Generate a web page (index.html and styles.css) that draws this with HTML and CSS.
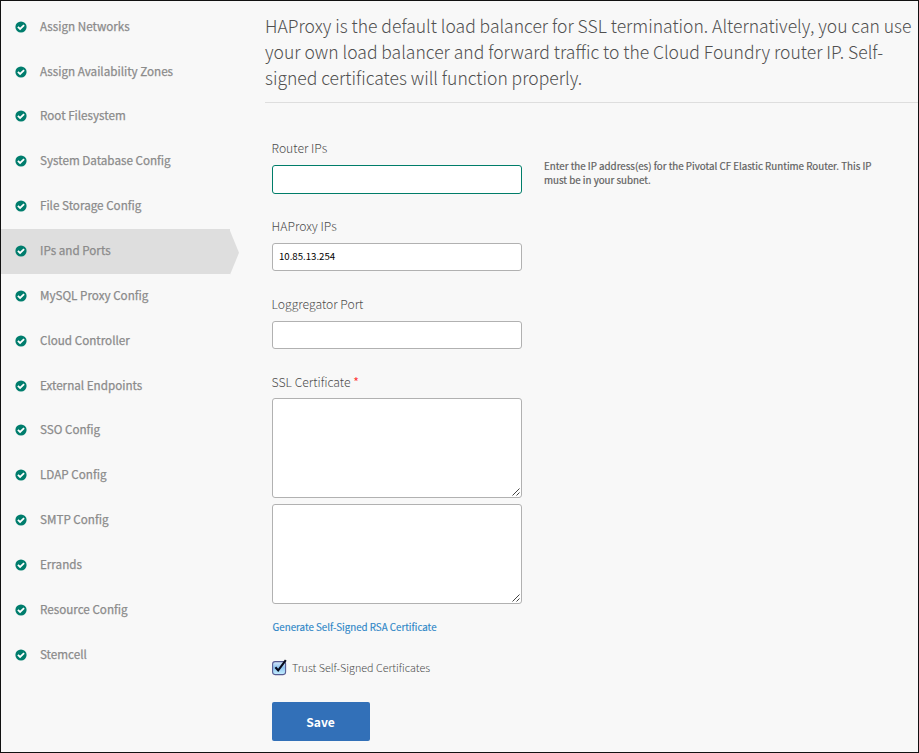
FILE: index.html
```html
<!DOCTYPE html>
<html lang="en">
<head>
<meta charset="utf-8">
<title>IPs and Ports</title>
<link rel="stylesheet" href="styles.css">
</head>
<body>
<svg class="defs" aria-hidden="true">
  <symbol id="done" viewBox="0 0 12 12">
    <circle cx="6" cy="6" r="5.6" fill="#007d6d"/>
    <path d="M2.9 5.8 5.1 8 9.1 4.1" fill="none" stroke="#fff" stroke-width="1.8"/>
  </symbol>
  <symbol id="grip" viewBox="0 0 8 8">
    <path d="M.5 7.5 7.5 .5M4.5 7.5 7.5 4.5" fill="none" stroke="#444" stroke-width="1"/>
  </symbol>
</svg>
<div class="page">
  <nav class="sidebar">
    <a class="item"><svg class="tick"><use href="#done"/></svg>Assign Networks</a>
    <a class="item"><svg class="tick"><use href="#done"/></svg>Assign Availability Zones</a>
    <a class="item"><svg class="tick"><use href="#done"/></svg>Root Filesystem</a>
    <a class="item"><svg class="tick"><use href="#done"/></svg>System Database Config</a>
    <a class="item"><svg class="tick"><use href="#done"/></svg>File Storage Config</a>
    <a class="item active"><svg class="tick"><use href="#done"/></svg>IPs and Ports</a>
    <a class="item"><svg class="tick"><use href="#done"/></svg>MySQL Proxy Config</a>
    <a class="item"><svg class="tick"><use href="#done"/></svg>Cloud Controller</a>
    <a class="item"><svg class="tick"><use href="#done"/></svg>External Endpoints</a>
    <a class="item"><svg class="tick"><use href="#done"/></svg>SSO Config</a>
    <a class="item"><svg class="tick"><use href="#done"/></svg>LDAP Config</a>
    <a class="item"><svg class="tick"><use href="#done"/></svg>SMTP Config</a>
    <a class="item"><svg class="tick"><use href="#done"/></svg>Errands</a>
    <a class="item"><svg class="tick"><use href="#done"/></svg>Resource Config</a>
    <a class="item"><svg class="tick"><use href="#done"/></svg>Stemcell</a>
  </nav>
  <main class="content">
    <p class="intro">HAProxy is the default load balancer for SSL termination. Alternatively, you can use<br>your own load balancer and forward traffic to the Cloud Foundry router IP. Self-<br>signed certificates will function properly.</p>
    <form class="form">
      <div class="field">
        <label class="label">Router IPs</label>
        <div class="row">
          <input class="input focused" type="text">
          <p class="help">Enter the IP address(es) for the Pivotal CF Elastic Runtime Router. This IP<br>must be in your subnet.</p>
        </div>
      </div>
      <div class="field">
        <label class="label">HAProxy IPs</label>
        <input class="input" type="text" value="10.85.13.254">
      </div>
      <div class="field">
        <label class="label">Loggregator Port</label>
        <input class="input" type="text">
      </div>
      <div class="field certs">
        <label class="label">SSL Certificate <span class="required">*</span></label>
        <div class="area"><textarea class="text"></textarea><svg class="grip"><use href="#grip"/></svg></div>
        <div class="area"><textarea class="text"></textarea><svg class="grip"><use href="#grip"/></svg></div>
      </div>
      <a class="generate">Generate Self-Signed RSA Certificate</a>
      <label class="trust">
        <svg class="check" viewBox="0 0 16 17">
          <defs><linearGradient id="aqua" x1="0" y1="0" x2="0" y2="1"><stop offset="0" stop-color="#d9e9fa"/><stop offset=".45" stop-color="#8fc3f0"/><stop offset="1" stop-color="#c5f0ff"/></linearGradient></defs>
          <rect x=".6" y="2.6" width="13" height="13" rx="2.5" fill="url(#aqua)" stroke="#565a91" stroke-width="1.1"/>
          <path d="M3.4 8.2 6.2 11.4 13.8 1.2" fill="none" stroke="#080b1c" stroke-width="2.1"/>
        </svg>
        <span>Trust Self-Signed Certificates</span>
      </label>
      <button class="save" type="button">Save</button>
    </form>
  </main>
</div>
</body>
</html>
```
FILE: styles.css
```css
* { box-sizing: border-box; }
body {
  margin: 0;
  font-family: "Noto Sans CJK SC", "Open Sans", sans-serif;
  color: #606060;
}
.defs { display: none; }
.page {
  display: flex;
  height: 753px;
  overflow: hidden;
  border: 1px solid #111;
  background: #f8f8f8;
}
.sidebar {
  width: 264px;
  flex: none;
  padding-top: 3.5px;
}
.item {
  display: flex;
  align-items: center;
  gap: 13.3px;
  width: 229px;
  height: 44.86px;
  padding: 0 0 2.4px 13.7px;
  color: #8b8b8b;
  font-size: 11.67px;
  line-height: 18px;
  -webkit-text-stroke: .25px;
}
.active {
  position: relative;
  background: #dedede;
}
.active::after {
  content: "";
  position: absolute;
  top: 0;
  left: 100%;
  width: 9px;
  height: 46px;
  background: #dedede;
  clip-path: polygon(0 2px, 9px 24px, 0 46px);
}
.tick { width: 12px; height: 12px; margin-top: 2px; }
.content { flex: 1; }
.intro {
  height: 102px;
  margin: 0;
  padding-top: 12px;
  border-bottom: 1px solid #dedede;
  color: #505050;
  font-size: 17.52px;
  font-weight: 300;
  line-height: 26px;
  white-space: nowrap;
}
.form {
  display: flex;
  flex-direction: column;
  align-items: flex-start;
  padding: 36px 0 0 7px;
}
.field { height: 78px; }
.label {
  display: block;
  height: 25.5px;
  margin-left: -.4px;
  color: #4c4c4c;
  font-size: 12.2px;
  font-weight: 300;
  line-height: 18px;
}
.required { color: #ff3030; font-weight: 400; }
.row { display: flex; gap: 22px; }
.input, .text {
  display: block;
  width: 250px;
  border: 1px solid #b1b1b1;
  border-radius: 3px;
  background: #fff;
  color: #000;
  font-family: inherit;
  outline: none;
}
.input {
  height: 28px;
  padding: 0 6px 1px;
  font-size: 9.65px;
}
.focused { height: 29px; border-color: #007d69; }
.help {
  margin: -6px 0 0;
  font-size: 9.77px;
  line-height: 14px;
  white-space: nowrap;
  -webkit-text-stroke: .2px;
}
.certs { height: 246px; }
.certs .label { height: 24.5px; }
.area { position: relative; width: 250px; margin-bottom: 6px; }
.text { height: 100px; resize: none; }
.grip { position: absolute; right: 2px; bottom: 2px; width: 8px; height: 8px; }
.generate {
  padding-left: .6px;
  color: #2d86c7;
  font-size: 9.75px;
  line-height: 16px;
  -webkit-text-stroke: .15px;
}
.trust {
  display: flex;
  gap: 4px;
  margin-top: 24px;
  color: #4c4c4c;
  font-size: 10.76px;
  font-weight: 300;
  line-height: 17px;
}
.check { width: 16px; height: 17px; }
.save {
  width: 98px;
  height: 39px;
  margin-top: 26px;
  padding: 0 1px 1px 0;
  border: 0;
  border-radius: 2px;
  background: #3270b8;
  color: #fff;
  font-family: inherit;
  font-size: 12.1px;
  font-weight: 700;
}
```
